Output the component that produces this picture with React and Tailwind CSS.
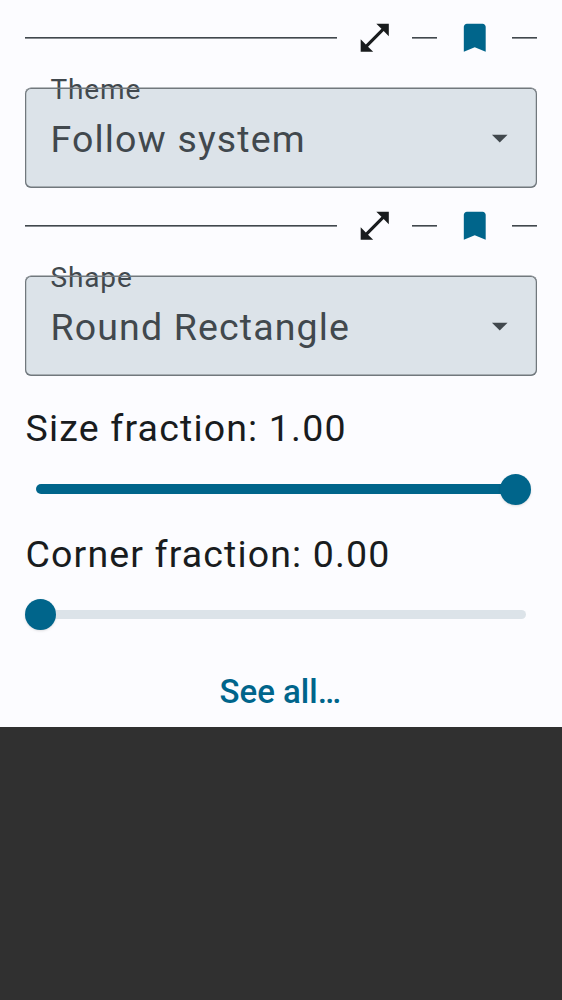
function ExpandIcon() {
  return (
    <svg className="h-[37.5px] w-[37.5px]" viewBox="0 0 24 24" fill="#191c1e" aria-hidden="true">
      <path d="M21 11V3h-8l3.29 3.29-10 10L3 13v8h8l-3.29-3.29 10-10z" />
    </svg>
  );
}

function BookmarkIcon() {
  return (
    <svg className="h-[37.5px] w-[37.5px]" viewBox="0 0 24 24" fill="#00658b" aria-hidden="true">
      <path d="M17 3H7c-1.100 0-2 .9-2 2v16l7-3 7 3V5c0-1.100-.9-2-2-2z" />
    </svg>
  );
}

function Rule({ className }) {
  return <div className={`h-[2px] border-b border-[#888c91] bg-[#41484d] ${className}`} />;
}

function Section({ label, value }) {
  return (
    <section>
      <div className="flex h-[75px] items-center">
        <Rule className="w-[312px]" />
        <div className="flex w-[75px] justify-center"><ExpandIcon /></div>
        <Rule className="w-[25px]" />
        <div className="flex w-[75px] justify-center"><BookmarkIcon /></div>
        <Rule className="w-[25px]" />
      </div>
      <div className="relative mt-[13px] h-[100px]">
        <div className="flex h-full items-center justify-between rounded-[6px] bg-[#dce3e9] pl-[25.5px] pr-[19px] text-[37.5px] tracking-[1.15px] text-[#41484d]">
          <span className="pt-[2px]">{value}</span>
          <svg className="h-[37.5px] w-[37.5px]" viewBox="0 0 24 24" fill="#41484d" aria-hidden="true">
            <path d="M7 10l5 5 5-5z" />
          </svg>
        </div>
        <span className="absolute left-[25.5px] top-[-15px] text-[28px] leading-[34px] tracking-[0.85px] text-[#41484d]">{label}</span>
        <div className="absolute inset-0 rounded-[6px] shadow-[inset_0_-0.25px_0_1.25px_#71787d,0_-0.5px_0_0_#71787d]" />
      </div>
    </section>
  );
}

export default function App() {
  return (
    <main className="flex min-h-[1000px] w-[562px] flex-col bg-[#303030] font-['Roboto',sans-serif]">
      <div className="h-[727px] bg-[#fcfcff] px-[25px] text-[#191c1e]">
        <Section label="Theme" value="Follow system" />
        <Section label="Shape" value="Round Rectangle" />
        <div className="mt-[24px] h-[56px] pl-[0.5px] text-[37.5px] leading-[56px] tracking-[1.17px]">Size fraction: 1.00</div>
        <div className="flex h-[66px] items-center">
          <div className="ml-[11px] h-[10px] w-[470px] rounded-l-full bg-[#00658b]" />
          <div className="-ml-[6.5px] h-[31px] w-[31px] rounded-full bg-[#00658b] shadow-sm" />
        </div>
        <div className="mt-[4px] h-[56px] pl-[0.5px] text-[37.5px] leading-[56px] tracking-[1.13px]">Corner fraction: 0.00</div>
        <div className="-mt-px flex h-[66px] items-center">
          <div className="h-[31px] w-[31px] rounded-full bg-[#00658b] shadow-sm" />
          <div className="h-[9px] w-[470px] rounded-r-full bg-[#dce3e9]" />
        </div>
        <div className="mt-[21px] pr-[1.5px] text-center text-[33px] font-medium leading-[48px] text-[#00658b]">See all…</div>
      </div>
    </main>
  );
}
